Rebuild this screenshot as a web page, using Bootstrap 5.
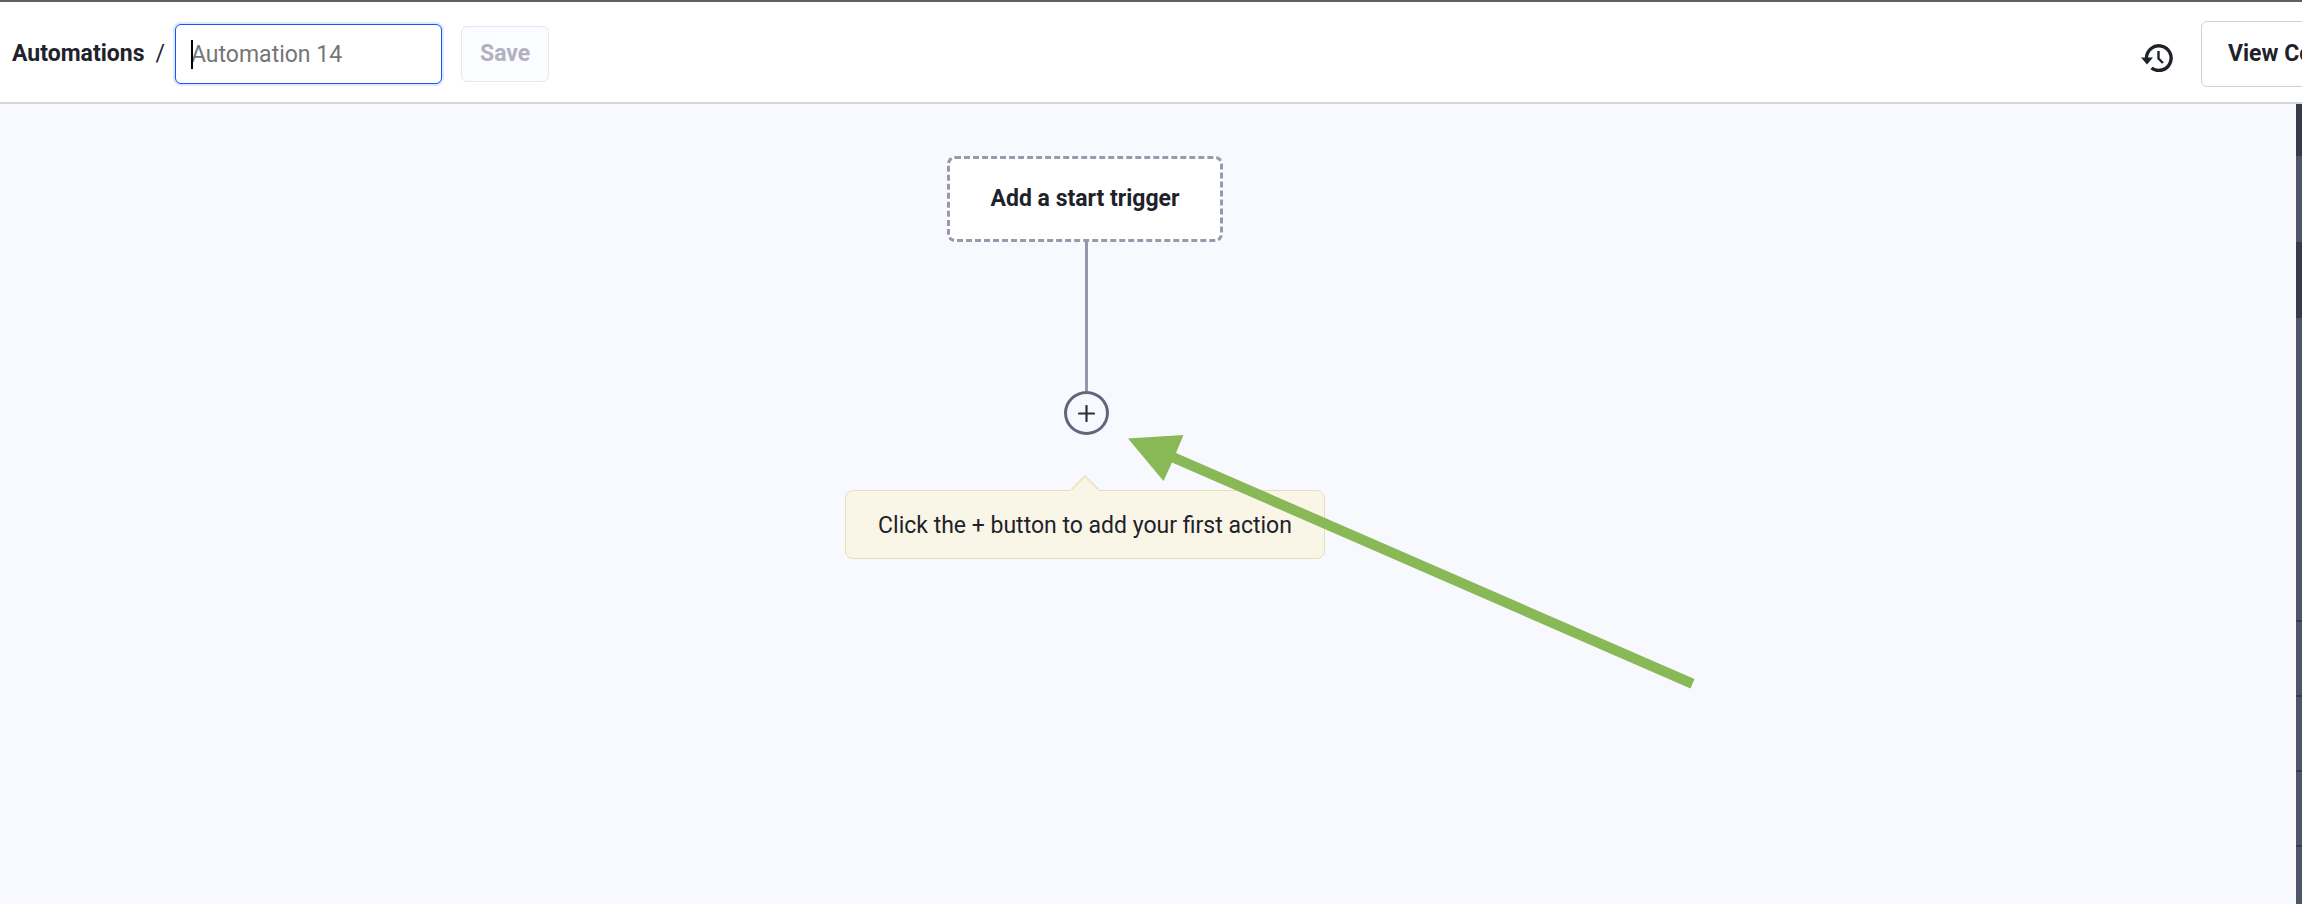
<!DOCTYPE html>
<html lang="en">
<head>
<meta charset="utf-8">
<meta name="viewport" content="width=device-width, initial-scale=1">
<title>Automations</title>
<link href="https://cdn.jsdelivr.net/npm/bootstrap@5.3.0/dist/css/bootstrap.min.css" rel="stylesheet">
<style>
  body { font-family: Roboto, "Noto Sans", sans-serif; font-size: 23px; line-height: 32px; color: #1f222b; background: #f8f9ff; }
  .topbar { height: 104px; padding: 4px 0 0 12px; border-top: 2px solid #615f66; border-bottom: 2px solid #d3d5e1; background: #fff; }
  .crumb { color: #1f222b; }
  .slash { margin: 0 10px 0 11px; }
  .name-box { position: relative; width: 267px; }
  .name-box .form-control { height: 60px; padding: 0 15px; font-size: 23px; border: 1px solid #1455f5; border-radius: 6px; box-shadow: 0 0 0 2px #e0e8fd; }
  .name-box .form-control::placeholder { color: #757575; opacity: 1; }
  .caret { position: absolute; left: 16px; top: 16px; width: 2px; height: 29px; background: #000; }
  .btn-save, .btn-save:disabled { height: 56px; margin-left: 19px; padding: 0 18px; font-size: 23px; color: #b1b1bf; background: #fbfcff; border: 1px solid #e7e8ef; border-radius: 6px; opacity: 1; }
  .btn-history { margin-right: 28px; padding: 0; line-height: 1; color: #1f222b; border: 0; }
  .view-slot { width: 101px; }
  .btn-view { height: 66px; padding: 0 26px; font-size: 23px; color: #1f222b; background: #fff; border: 1px solid #cdcfdc; border-radius: 6px; }
  .canvas { padding: 52px 126px 0 0; }
  .trigger { width: 276px; height: 86px; font-size: 23px; color: #1f222b; background: #fff; border: 3px dashed #959ab0; border-radius: 8px; }
  .link-col { padding-left: 3px; }
  .stem { width: 3px; height: 149px; background: #9297ad; }
  .btn-plus { width: 45px; height: 44px; color: #2c303d; border: 3px solid #61667d; border-radius: 50%; background: #f8f9ff; }
  .callout-box { position: relative; width: 480px; height: 69px; margin-top: 55px; padding-top: 2px; background: #faf6e7; border: 1px solid #ebdfb2; border-radius: 8px; }
  .pointer { position: absolute; left: 50%; top: -16px; margin-left: -14px; }
  .arrow { position: absolute; left: 50%; top: -57px; margin-left: 42px; pointer-events: none; }
  .side { width: 6px; background: #505669; }
  .side-dark { background: #373b49; }
  .side-rule { height: 75px; border-top: 2px solid #373b49; }
</style>
</head>
<body class="vh-100 d-flex flex-column overflow-hidden">
<header class="topbar d-flex align-items-center flex-shrink-0 overflow-hidden">
  <a class="crumb fw-bold text-decoration-none" href="#">Automations</a>
  <span class="slash">/</span>
  <div class="name-box">
    <input class="form-control" type="text" placeholder="Automation 14" aria-label="Automation name">
    <span class="caret"></span>
  </div>
  <button class="btn btn-save fw-bold" type="button" disabled>Save</button>
  <button class="btn btn-history ms-auto mt-2" type="button" aria-label="History">
    <svg class="d-block" width="32" height="28" viewBox="0 0 32 28" fill="none" stroke="currentColor">
      <path d="M5.500 14A12.300 12.300 0 1 1 10.500 24" stroke-width="3.400"/>
      <path d="M0 13.500H12L6 20.500Z" fill="currentColor" stroke="none"/>
      <path d="M17.500 7V14.500L22 19" stroke-width="2.400"/>
    </svg>
  </button>
  <div class="view-slot flex-shrink-0">
    <button class="btn btn-view fw-bold text-nowrap" type="button">View Contacts</button>
  </div>
</header>
<div class="d-flex flex-grow-1">
  <main class="canvas flex-grow-1 d-flex flex-column align-items-center">
    <button class="btn trigger fw-bold" type="button">Add a start trigger</button>
    <div class="link-col d-flex flex-column align-items-center">
      <div class="stem"></div>
      <button class="btn btn-plus p-0 d-flex align-items-center justify-content-center" type="button" aria-label="Add action">
        <svg width="17" height="17" viewBox="0 0 17 17" stroke="currentColor" stroke-width="2.200" stroke-linecap="round"><path d="M8.500 1V16M1 8.500H16"/></svg>
      </button>
    </div>
    <div class="callout-box d-flex align-items-center justify-content-center">
      <svg class="pointer" width="28" height="17" viewBox="0 0 28 17"><path d="M0 17V15L14 1L28 15V17Z" fill="#faf6e7"/><path d="M0.500 14.500L14 1L27.500 14.500" fill="none" stroke="#ebdfb2" stroke-width="1.400"/></svg>
      <span class="text-nowrap">Click the + button to add your first action</span>
      <svg class="arrow" width="570" height="256" viewBox="0 0 570 256"><path d="M1 4.500L56.500 1L49 19L567.500 245L563.500 254.500L45 28.500L36.500 47Z" fill="#89b856"/></svg>
    </div>
  </main>
  <aside class="side d-flex flex-column">
    <div class="side-dark" style="height:52px"></div>
    <div style="height:86px"></div>
    <div class="side-dark" style="height:76px"></div>
    <div style="height:302px"></div>
    <div class="side-rule"></div>
    <div class="side-rule"></div>
    <div class="side-rule"></div>
    <div class="side-rule"></div>
  </aside>
</div>
<script src="https://cdn.jsdelivr.net/npm/bootstrap@5.3.0/dist/js/bootstrap.bundle.min.js"></script>
</body>
</html>
